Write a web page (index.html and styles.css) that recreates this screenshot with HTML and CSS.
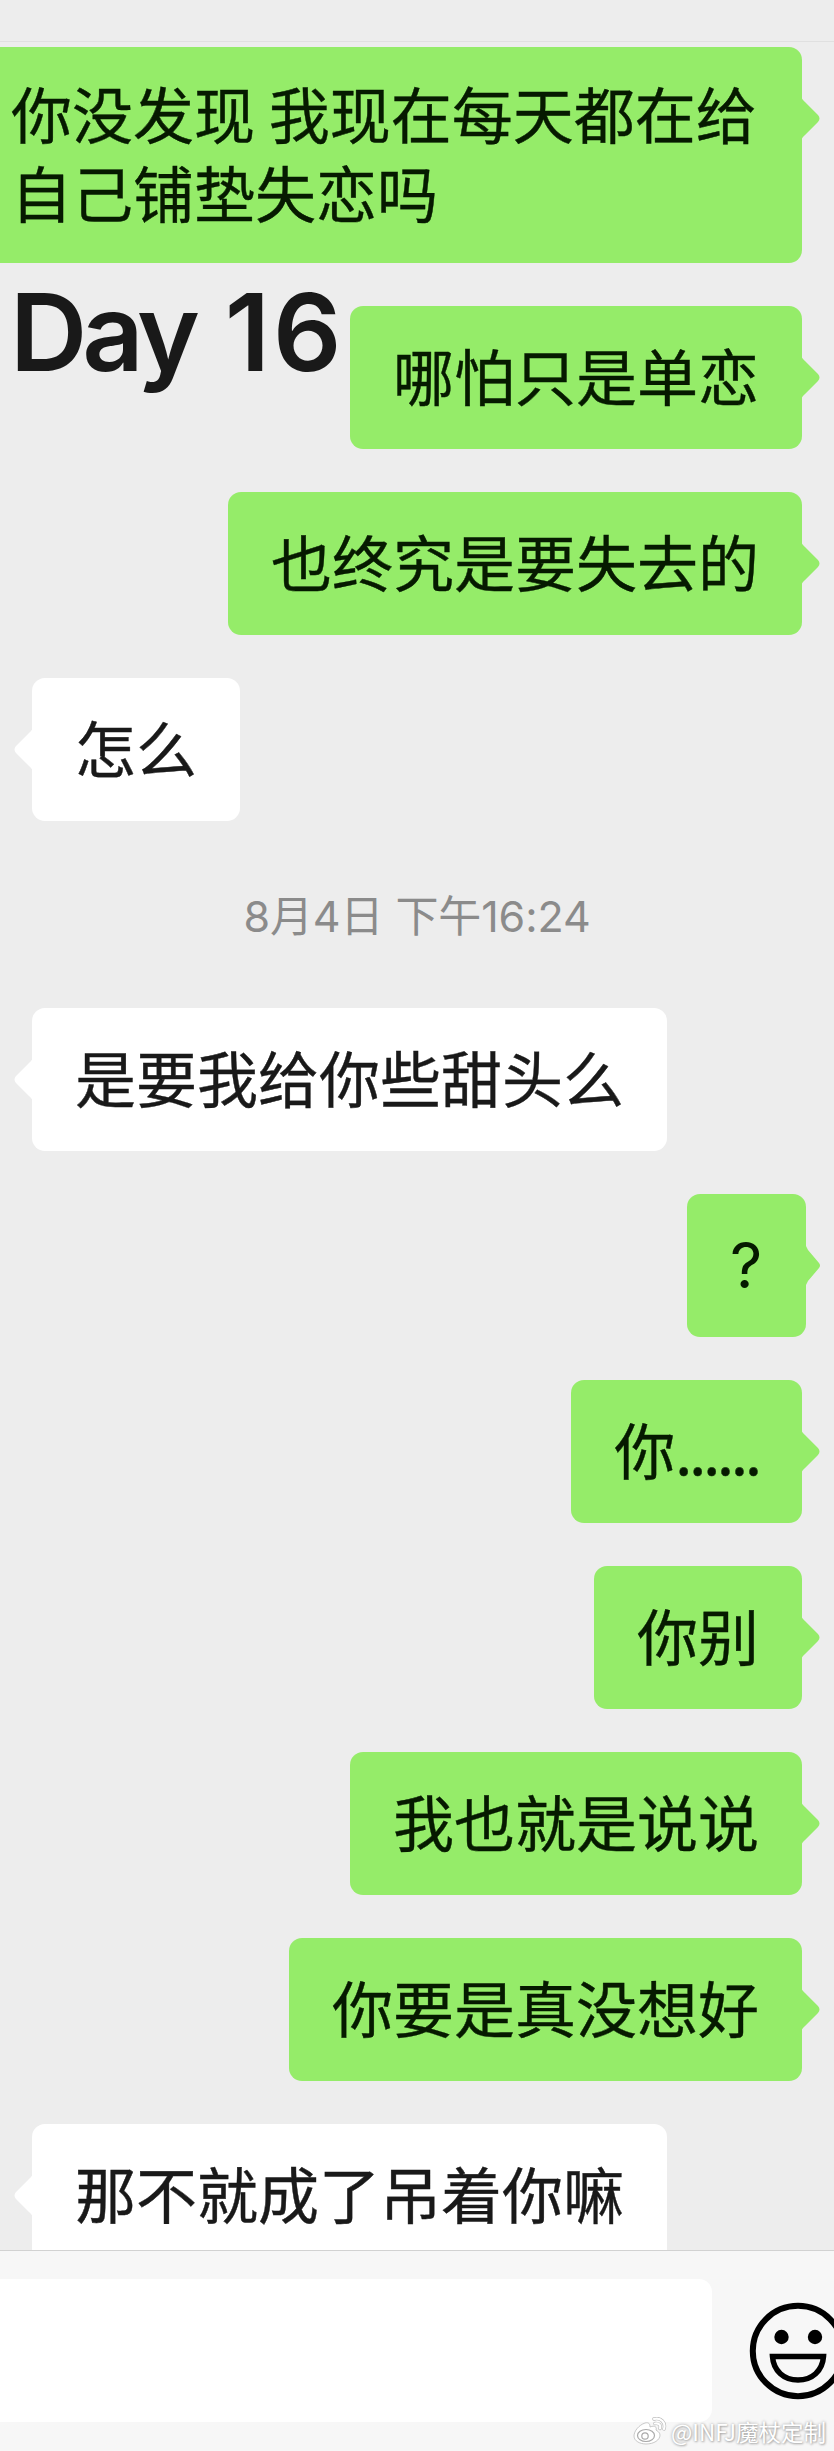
FILE: index.html
```
<!DOCTYPE html>
<html lang="zh-CN">
<head>
    <meta charset="UTF-8">
    <meta name="viewport" content="width=device-width, initial-scale=1.0">
    <title>聊天记录</title>
    <link rel="stylesheet" href="styles.css">
</head>
<body>
<div class="chat">
    <div class="header"></div>
    <div class="messages">
        <div class="row me">
            <div class="bubble long">你没发现 我现在每天都在给自己铺垫失恋吗</div>
        </div>
        <div class="row me">
            <div class="day">Day <span class="num">16</span></div>
            <div class="bubble">哪怕只是单恋</div>
        </div>
        <div class="row me"><div class="bubble">也终究是要失去的</div></div>
        <div class="row"><div class="bubble">怎么</div></div>
        <div class="time">8月4日 下午16:24</div>
        <div class="row"><div class="bubble">是要我给你些甜头么</div></div>
        <div class="row me"><div class="bubble short">?</div></div>
        <div class="row me"><div class="bubble">你<span class="dots">......</span></div></div>
        <div class="row me"><div class="bubble">你别</div></div>
        <div class="row me"><div class="bubble">我也就是说说</div></div>
        <div class="row me"><div class="bubble">你要是真没想好</div></div>
        <div class="row"><div class="bubble">那不就成了吊着你嘛</div></div>
    </div>
    <div class="footer">
        <div class="input"></div>
        <svg class="smile" width="98" height="98" viewBox="0 0 98 98">
            <circle cx="49" cy="49" r="45.2" fill="none" stroke="#000" stroke-width="6"/>
            <circle cx="32.500" cy="35" r="7.200"/>
            <circle cx="66" cy="35" r="7.200"/>
            <path d="M23.500 54.500H74.500C73.500 69 63 78 49 78S24.500 69 23.500 54.500Z" fill="none" stroke="#000" stroke-width="5.500"/>
        </svg>
        <div class="watermark">
            <svg class="weibo" width="34" height="28" viewBox="0 0 34 28">
                <path d="M12 6C6 8 1 14 1 19C1 24 7 27 13 27C21 27 27 23 27 18C27 15 24 14 23 13C24 10 22 8 17 10C17 7 16 5 12 6Z" fill="#fff" stroke="#bbb" stroke-width=".8"/>
                <ellipse cx="13" cy="18.500" rx="8.500" ry="6" fill="none" stroke="#aaa" stroke-width="1.200"/>
                <circle cx="12" cy="19" r="3.200" fill="none" stroke="#aaa" stroke-width="1.200"/>
                <path d="M21 2C28 0 33 6 31 12M22 6.500C26 6 28 8 27 11.500" fill="none" stroke="#bbb" stroke-width="3.400" stroke-linecap="round"/>
                <path d="M21 2C28 0 33 6 31 12M22 6.500C26 6 28 8 27 11.500" fill="none" stroke="#fff" stroke-width="2.200" stroke-linecap="round"/>
            </svg>
            <span>@INFJ魔杖定制</span>
        </div>
    </div>
</div>
</body>
</html>
```

FILE: styles.css
```
* {
    box-sizing: border-box;
}

body {
    margin: 0;
    background: #ededed;
    font-family: "Noto Sans CJK SC", sans-serif;
    color: #191919;
}

.chat {
    width: 834px;
    height: 2451px;
    display: flex;
    flex-direction: column;
    overflow: hidden;
}

.header {
    flex: none;
    height: 42px;
    background: #ededed;
    border-bottom: 1px solid #e0e0e0;
}

.messages {
    flex: none;
    height: 2208px;
    padding: 5px 32px 0;
    overflow: hidden;
    display: flex;
    flex-direction: column;
}

.row {
    flex: none;
    display: flex;
    margin-bottom: 43px;
}

.row.me {
    justify-content: flex-end;
}

.bubble {
    position: relative;
    height: 143px;
    padding: 29px 43px 35px;
    background: #fff;
    border-radius: 13px;
    font-size: 61px;
    line-height: 79px;
    white-space: nowrap;
    -webkit-text-stroke: 0.4px;
}

.me .bubble {
    background: #95ec69;
    color: #061a00;
}

/* 气泡小三角 */
.bubble::before {
    content: "";
    position: absolute;
    left: -18px;
    top: 50px;
    width: 19px;
    height: 43px;
    background: #fff;
    clip-path: path("M19 0C18 2 17 3 15 5L2 18Q-1 21.500 2 25L15 38C17 40 18 41 19 43Z");
}

.me .bubble::before {
    left: auto;
    right: -18px;
    background: #95ec69;
    transform: scaleX(-1);
}

.me .bubble.long {
    flex: none;
    width: 834px;
    height: 216px;
    padding: 26px 32px 32px 43px;
    white-space: normal;
}

.me .bubble.short {
    width: 119px;
    margin-right: -4px;
    padding-top: 32px;
    padding-bottom: 32px;
    font-family: Inter, sans-serif;
    font-size: 63px;
    -webkit-text-stroke: 0;
}

.me .bubble.short::before {
    width: 15px;
    right: -14px;
    clip-path: path("M15 0C14 2 13 4 12 6L1 19Q-1 21.500 1 24L12 37C13 39 14 41 15 43Z");
}

.dots {
    letter-spacing: -3px;
}

.day {
    margin: -34px auto 0 -22px;
    font-family: Inter, sans-serif;
    font-size: 107px;
    font-weight: 600;
    line-height: 120px;
    letter-spacing: -5px;
    word-spacing: 8px;
    white-space: nowrap;
}

.num {
    letter-spacing: 3px;
}

.time {
    flex: none;
    height: 144px;
    line-height: 104px;
    text-align: center;
    font-family: Inter, "Noto Sans CJK SC", sans-serif;
    font-size: 43px;
    letter-spacing: -0.1px;
    color: #8b8b8b;
}

.footer {
    position: relative;
    flex: none;
    display: flex;
    height: 201px;
    padding-top: 28px;
    background: #f7f7f7;
    border-top: 1px solid #d2d2d2;
}

.input {
    flex: none;
    width: 712px;
    height: 143px;
    background: #fff;
    border-radius: 0 13px 13px 0;
}

.smile {
    flex: none;
    margin: 23px 0 0 37px;
}

.watermark {
    position: absolute;
    left: 633px;
    bottom: 3px;
    display: flex;
    align-items: center;
    color: #fff;
    font-size: 22.5px;
    line-height: 34px;
    text-shadow: 0 0 3px #999, 1px 1px 2px #bbb;
    white-space: nowrap;
}

.weibo {
    margin-right: 4px;
}
```
